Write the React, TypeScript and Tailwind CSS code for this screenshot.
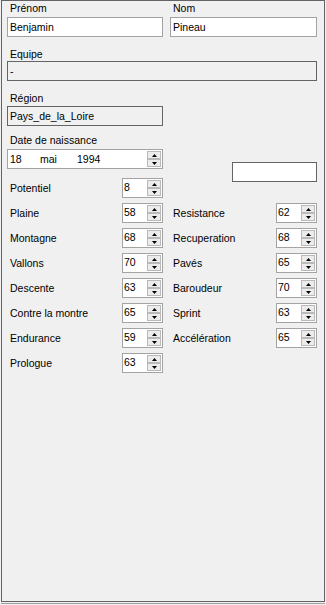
const font = { fontFamily: '"Liberation Sans", Arial, sans-serif' }

function Spinner() {
  return (
    <div className="flex flex-col w-[14px] h-full py-px mr-px">
      <div className="flex-1 flex items-center justify-center border border-[#b9b9b9] bg-[#ececec]">
        <svg width="5" height="3" viewBox="0 0 5 3">
          <path d="M2.5 0L5 3H0z" fill="#000" />
        </svg>
      </div>
      <div className="flex-1 flex items-center justify-center border border-[#b9b9b9] bg-[#ececec]">
        <svg width="5" height="3" viewBox="0 0 5 3">
          <path d="M0 0H5L2.5 3z" fill="#000" />
        </svg>
      </div>
    </div>
  )
}

function NumBox({ value }: { value: string }) {
  return (
    <div className="flex w-[41px] h-[20px] border border-[#a3a3a3] bg-white">
      <div className="flex-1 pl-px pt-px leading-[14px]">{value}</div>
      <Spinner />
    </div>
  )
}

function TextBox({ value, w }: { value: string; w: string }) {
  return (
    <div className={`${w} h-[20px] border border-[#a3a3a3] bg-white pl-[2px] leading-[18px]`}>{value}</div>
  )
}

const left = [
  ['Potentiel', '8'],
  ['Plaine', '58'],
  ['Montagne', '68'],
  ['Vallons', '70'],
  ['Descente', '63'],
  ['Contre la montre', '65'],
  ['Endurance', '59'],
  ['Prologue', '63'],
]

const right: (string[] | null)[] = [
  null,
  ['Resistance', '62'],
  ['Recuperation', '68'],
  ['Pavés', '65'],
  ['Baroudeur', '70'],
  ['Sprint', '63'],
  ['Accélération', '65'],
  null,
]

export default function App() {
  return (
    <div className="w-[326px] h-[605px] bg-[#f0f0f0] text-[10.5px] text-black" style={font}>
      <div className="ml-px w-[324px] h-[602px] border border-[#646464] pl-[5px]">
        {/* Prénom / Nom */}
        <div className="flex">
          <div className="w-[156px]">
            <div className="h-[16px] pl-[3px] pt-px leading-[13px]">Prénom</div>
            <TextBox value="Benjamin" w="w-[156px]" />
          </div>
          <div className="ml-[7px] w-[147px]">
            <div className="h-[16px] pl-[3px] pt-px leading-[13px]">Nom</div>
            <TextBox value="Pineau" w="w-[147px]" />
          </div>
        </div>

        {/* Equipe */}
        <div className="h-[24px] pl-[3px] pt-[11px] leading-[13px]">Equipe</div>
        <div className="w-[310px] h-[20px] border border-[#646464] pl-[2px] leading-[18px]">-</div>

        {/* Région */}
        <div className="h-[25px] pl-[3px] pt-[11px] leading-[13px]">Région</div>
        <div className="w-[156px] h-[20px] border border-[#646464] pl-[2px] leading-[18px]">Pays_de_la_Loire</div>

        {/* Date de naissance */}
        <div className="flex items-start h-[43px]">
          <div className="w-[156px]">
            <div className="h-[23px] pl-[3px] pt-[8px] leading-[13px]">Date de naissance</div>
            <div className="flex w-[156px] h-[20px] border border-[#a3a3a3] bg-white">
              <div className="flex-1 flex pl-[2px] leading-[18px]">
                <span className="w-[30px]">18</span>
                <span className="w-[37px]">mai</span>
                <span>1994</span>
              </div>
              <Spinner />
            </div>
          </div>
          <div className="ml-[69px] mt-[36px] w-[85px] h-[20px] shrink-0 border border-[#646464] bg-white" />
        </div>

        {/* Caractéristiques */}
        <div className="mt-[9px] flex flex-col">
          {left.map((l, i) => {
            const r = right[i]
            return (
              <div key={l[0]} className="flex h-[25px]">
                <div className="w-[115px] pl-[3px] pt-[4px] leading-[13px]">{l[0]}</div>
                <NumBox value={l[1]} />
                {r && (
                  <>
                    <div className="ml-[7px] w-[106px] pl-[3px] pt-[4px] leading-[13px]">{r[0]}</div>
                    <NumBox value={r[1]} />
                  </>
                )}
              </div>
            )
          })}
        </div>
      </div>
      <div className="mt-px ml-px w-[324px] h-px bg-[#a0a0a0]" />
    </div>
  )
}
